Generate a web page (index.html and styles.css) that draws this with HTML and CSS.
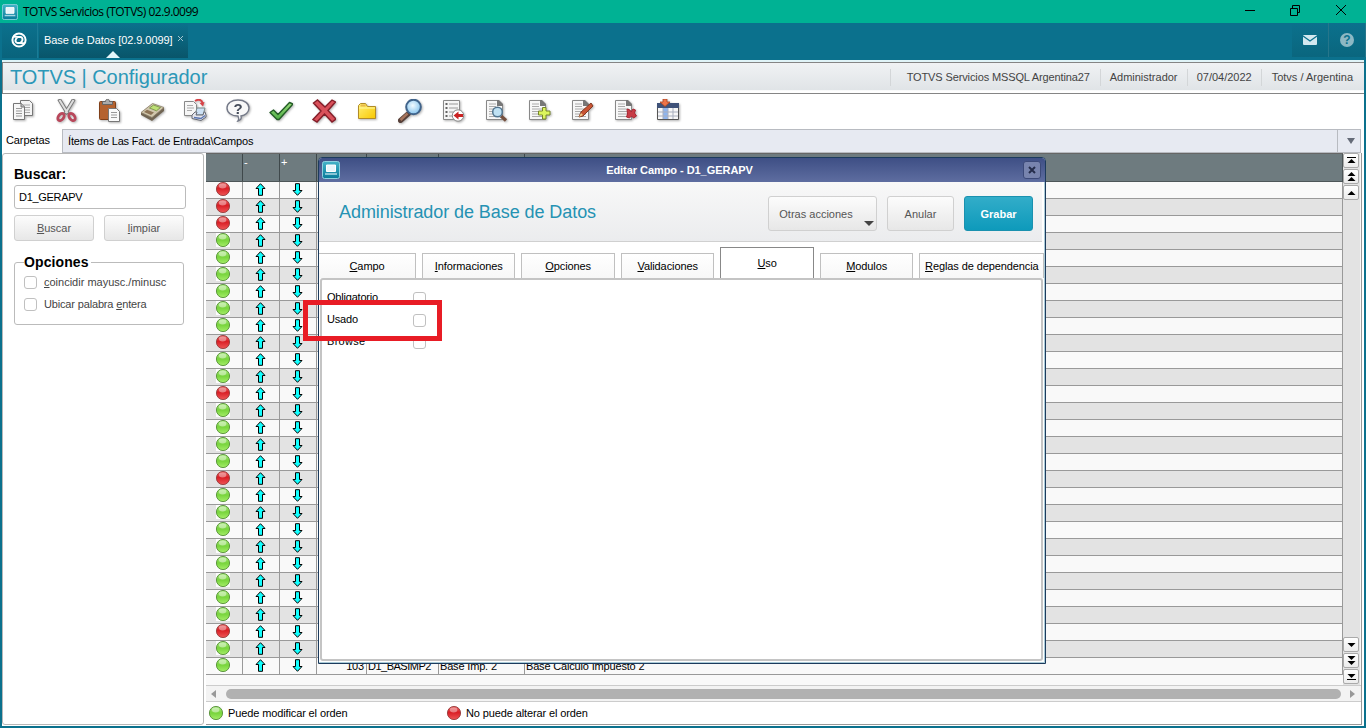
FILE: index.html
```html
<!DOCTYPE html>
<html lang="es">
<head>
  <meta charset="UTF-8">
  <meta name="viewport" content="width=device-width, initial-scale=1.0">
  <title>TOTVS Servicios (TOTVS) 02.9.0099</title>
  <link rel="stylesheet" href="styles.css">
</head>
<body>
  <!-- shared icons -->
  <svg class="defs" width="0" height="0">
    <defs>
      <linearGradient id="gTeal" x1="0" y1="0" x2="0" y2="1"><stop offset="0" stop-color="#45b3c8"/><stop offset="1" stop-color="#087b9a"/></linearGradient>
      <linearGradient id="gRed" x1="0" y1="0" x2="0" y2="1"><stop offset="0" stop-color="#e76464"/><stop offset=".45" stop-color="#d91e25"/><stop offset="1" stop-color="#ee5656"/></linearGradient>
      <linearGradient id="gGreen" x1="0" y1="0" x2="0" y2="1"><stop offset="0" stop-color="#a6e77d"/><stop offset=".5" stop-color="#78d43c"/><stop offset="1" stop-color="#a5ee69"/></linearGradient>
      <linearGradient id="gFolder" x1="0" y1="0" x2="1" y2="1"><stop offset="0" stop-color="#fff176"/><stop offset="1" stop-color="#f8c800"/></linearGradient>
      <linearGradient id="gCheck" x1="0" y1="0" x2="0" y2="1"><stop offset="0" stop-color="#9bdc7c"/><stop offset="1" stop-color="#4fae45"/></linearGradient>
      <radialGradient id="gLens" cx=".45" cy=".4" r=".6"><stop offset="0" stop-color="#f2fbff"/><stop offset="1" stop-color="#86c4ee"/></radialGradient>
      <symbol id="app" viewBox="0 0 18 18"><rect x=".5" y=".5" width="17" height="17" rx="2" fill="url(#gTeal)" stroke="#8dd1df"/><path d="M4.500 4h9v6.500h-9z" fill="#e8f5fa" stroke="#fff"/><path d="M3 13h12" stroke="#a5d5e2" stroke-width="1.600"/></symbol>
      <symbol id="red" viewBox="0 0 16 16"><circle cx="8" cy="8" r="6.600" fill="url(#gRed)" stroke="#963c3c" stroke-width=".9"/><ellipse cx="7.600" cy="5" rx="3.800" ry="2.400" fill="#fff" opacity=".4"/></symbol>
      <symbol id="green" viewBox="0 0 16 16"><rect x="1" y="1" width="14" height="14" fill="#fcfcfc"/><circle cx="8" cy="8" r="6.600" fill="url(#gGreen)" stroke="#558f37" stroke-width=".9"/><ellipse cx="7.600" cy="5" rx="3.800" ry="2.400" fill="#fff" opacity=".45"/></symbol>
      <symbol id="up" viewBox="0 0 11 13"><path d="M5.500 .7L10 5.500H7.500v6.800h-4V5.500H1z" fill="#1ff" stroke="#000"/></symbol>
      <symbol id="down" viewBox="0 0 11 13"><path d="M5.500 12.300L10 7.500H7.500V.7h-4v6.800H1z" fill="#1ff" stroke="#000"/></symbol>
      <symbol id="page" viewBox="0 0 24 24"><path d="M2.500 1.500h11.500l4.500 4.500v14.500h-16z" fill="#f7f7f7" stroke="#888"/><path d="M13 1h2l4 4v2h-6z" fill="#777"/><path d="M5 5h7M5 7.500h7M5 10h11M5 12.500h11M5 15h11M5 17.500h11" stroke="#aaa"/></symbol>
    </defs>
  </svg>

  <div class="titlebar">
    <svg class="app-icon" width="16" height="16"><use href="#app"/></svg>
    <span class="title-text">TOTVS Servicios (TOTVS) 02.9.0099</span>
    <svg class="win-controls" width="104" height="14" fill="none" stroke="#000"><path d="M0 7.500h10M45.500 5.500h7v7h-7zM47.500 5v-2.500h7v7h-2.500M91 2l10 10M101 2l-10 10"/></svg>
  </div>

  <div class="tabbar">
    <div class="home"><svg width="16" height="16" fill="none" stroke="#fff" stroke-width="2"><circle cx="8" cy="8" r="6.600"/><path d="M2 4.500L7 5h2.500c2 0 2.500 2.500 1.500 4L9.500 11M14 11.500L9 11H6.500c-2 0-2.500-2.500-1.500-4L6.500 5"/></svg></div>
    <div class="app-tab"><span>Base de Datos [02.9.0099]</span><svg width="7" height="7" stroke="#a4c6d0"><path d="M1 1l5 5M6 1L1 6"/></svg><i class="pointer"></i></div>
    <div class="tool"><svg width="14" height="10"><rect width="14" height="10" rx="1" fill="#d3e8ef"/><path d="M0 1l7 5 7-5" fill="none" stroke="#0b718d" stroke-width="1.300"/></svg></div>
    <div class="tool"><span class="help">?</span></div>
  </div>

  <div class="window">
    <div class="header">
      <h1>TOTVS | Configurador</h1>
      <span class="info i1">TOTVS Servicios MSSQL Argentina27</span>
      <span class="info i2">Administrador</span>
      <span class="info i3">07/04/2022</span>
      <span class="info i4">Totvs / Argentina</span>
    </div>

    <div class="toolbar">
      <!-- copiar -->
      <svg viewBox="0 0 24 24"><path d="M9.500 1.500h9l3 3v12h-12z" fill="#f4f4f4" stroke="#777"/><path d="M12 6h7M12 8.500h7M12 11h7M12 13.500h7" stroke="#aaa"/><path d="M2.500 4.500h8l3 3v13h-11z" fill="#f7f7f7" stroke="#777"/><path d="M10 4v4h4" fill="#bbb" stroke="#777"/><path d="M5 9.500h6M5 12h6M5 14.500h6M5 17h6" stroke="#999"/></svg>
      <!-- cortar -->
      <svg viewBox="0 0 24 24" fill="none"><path d="M5 0l9 15M20 0l-9 15" stroke="#777" stroke-width="3.800"/><path d="M5.500 1l8 13M19.500 1l-8 13" stroke="#dedede" stroke-width="2"/><ellipse cx="7" cy="18" rx="2.600" ry="4" transform="rotate(38 7 18)" stroke="#b9475b" stroke-width="2.800"/><ellipse cx="18" cy="18" rx="2.600" ry="4" transform="rotate(-38 18 18)" stroke="#b9475b" stroke-width="2.800"/></svg>
      <!-- pegar -->
      <svg viewBox="0 0 24 24"><rect x="2.500" y="2.500" width="16" height="18" rx="1" fill="#b4622f" stroke="#804019"/><path d="M5.500 5.500v-3h3c0-3 4-3 4 0h3v3z" fill="#aaa" stroke="#666"/><path d="M11.500 9.500h8l3 3v10h-11z" fill="#fafafa" stroke="#777"/><path d="M14 13.500h6M14 16h6M14 18.500h6" stroke="#999"/></svg>
      <!-- calculadora -->
      <svg viewBox="0 0 24 24"><path d="M1 14l11-9 12 4v3L12 22 1 16z" fill="#716553"/><path d="M1 13.500L12.500 4.500 24 8.500 12 18.500z" fill="#d0c6ac" stroke="#8b7f68" stroke-width=".8"/><path d="M9.500 9l4-3 7 2.500-4 3.300z" fill="#bedf76" stroke="#6d8c3d" stroke-width=".8"/><path d="M4 13l3-2.200 7 2.700-3 2.400z" fill="#8c7356"/></svg>
      <!-- imprimir -->
      <svg viewBox="0 0 24 24"><path d="M1.500 2.500h9l3 3v11h-12z" fill="#f6f6f6" stroke="#888"/><path d="M4 6.500h6M4 9h7M4 11.500h5" stroke="#aaa"/><path d="M12 2c4-2.500 7-1 7.500 2" fill="none" stroke="#d74347" stroke-width="2"/><path d="M16.500 4l5-1-1.500 4.500z" fill="#d74347"/><path d="M14 9h8l-2 7h-8z" fill="#cde1f5" stroke="#788"/><path d="M9 16l3-3h2l-1 3h7l1-3h1l1 3v2l-5 3.500-9-2z" fill="#e4e5ec" stroke="#666a75"/><path d="M11 18.500l7 1 4-3" fill="none" stroke="#5874b1" stroke-width="1.300"/></svg>
      <!-- ayuda -->
      <svg viewBox="0 0 24 24"><path d="M12 1c6.600 0 11 3.600 11 8s-4 7.500-8 8c1 3-1 4.500-3 5 1-1.500 1-3 0-5C5.500 17 1 13.500 1 9s4.400-8 11-8z" fill="#f8f8f8" stroke="#737887" stroke-width="1.400"/><text x="12" y="14.500" text-anchor="middle" class="qmark">?</text></svg>
      <!-- aceptar -->
      <svg viewBox="0 0 24 24"><path d="M1 13.500l3.500-2.500 4.500 4.500L20.500 3.500 24 5 10 20.500H8z" fill="url(#gCheck)" stroke="#235c26" stroke-width="1.400" stroke-linejoin="round"/></svg>
      <!-- cancelar -->
      <svg viewBox="0 0 24 24"><path d="M1.500 4l4-3L13 8l7-7 3.500 2L16 11.500l8 8.500-4 3-7.500-8L5 23l-4-2.500 8-8.500z" fill="#d9505a" stroke="#841d28" stroke-width="1.400"/></svg>
      <!-- carpeta -->
      <svg viewBox="0 0 24 24"><path d="M3.500 19.500V6.500l2-2h5l2 3h8v12z" fill="url(#gFolder)" stroke="#b18b27"/><path d="M5.500 6.500h5" stroke="#e7b84d" stroke-width="2"/><path d="M4 9h16" stroke="#fff8a1"/></svg>
      <!-- buscar -->
      <svg viewBox="0 0 24 24"><path d="M2.500 21.500l8-7" stroke="#574039" stroke-width="5" stroke-linecap="round"/><path d="M2.500 21l7-6.500" stroke="#a6745c" stroke-width="2.500"/><circle cx="15.500" cy="8" r="7.300" fill="url(#gLens)" stroke="#41648b" stroke-width="2"/></svg>
      <svg viewBox="0 0 24 24"><path d="M2.500 1.500h16v19h-16z" fill="#f5f5f5" stroke="#888"/><path d="M8 5h9M8 9h9M8 13h7M8 17h4" stroke="#999"/><path d="M4.500 5h2M4.500 9h2M4.500 13h2M4.500 17h2" stroke="#333" stroke-width="1.500"/><circle cx="17" cy="16.500" r="5.700" fill="#fff" stroke="#888"/><path d="M12.500 16.500l5-4v2.500H22v3h-4.500v2.500z" fill="#ca2222"/></svg>
      <svg viewBox="0 0 24 24"><use href="#page"/><path d="M17 17l5 4.500" stroke="#76513f" stroke-width="3.400"/><circle cx="13.500" cy="13" r="4.800" fill="#bfe1f3" stroke="#527590" stroke-width="1.500"/></svg>
      <svg viewBox="0 0 24 24"><use href="#page"/><path d="M15.500 8.500h3.500v3.500h4v4h-4v4h-3.500v-4h-4v-4h4z" fill="#dcf55d" stroke="#77862a"/></svg>
      <svg viewBox="0 0 24 24"><use href="#page"/><path d="M9 18l2-5 10-9 2 3-10 10z" fill="#c85434" stroke="#813923"/><path d="M9 18l2-4 2 2z" fill="#f1c783"/></svg>
      <svg viewBox="0 0 24 24"><use href="#page"/><path d="M14 10l3 1 1 2 2-3 2.500 1-1 3 2 3-3 2-2-2-2 2-3-1 1-3z" fill="#c73c46" stroke="#a92430"/></svg>
      <svg viewBox="0 0 24 24"><path d="M1.500 4.500h21v16h-21z" fill="#f7f7f7" stroke="#555"/><path d="M1 4h22v5H1z" fill="#3f5279"/><path d="M7 9h5v11H7z" fill="#8eb5ef"/><path d="M2 13h20M2 17h20M7 9v11M12 9v11M17 9v11" stroke="#a9afbe"/><path d="M7 0h4v3h3L9 7.500 4 3h3z" fill="#ee7448" stroke="#a84424" stroke-width=".8"/></svg>
    </div>

    <div class="path-row">
      <label>Carpetas</label>
      <div class="combo"><span>Ítems de Las Fact. de Entrada\Campos</span><div class="combo-arrow"><i class="tri-down"></i></div></div>
    </div>

    <div class="main">
      <div class="search-panel">
        <h2>Buscar:</h2>
        <div class="search-input">D1_GERAPV</div>
        <div class="search-buttons"><div class="btn"><u>B</u>uscar</div><div class="btn"><u>l</u>impiar</div></div>
        <div class="options">
          <h2>Opciones</h2>
          <div class="option"><i class="check"></i><span class="case"><u>c</u>oincidir mayusc./minusc</span></div>
          <div class="option"><i class="check"></i><span>Ubicar palabra <u>e</u>ntera</span></div>
        </div>
      </div>

      <div class="grid-panel">
        <div class="grid-area">
          <div class="grid">
            <div class="grid-row grid-head"><div></div><div>-</div><div>+</div><div></div><div></div><div></div><div></div></div>
            <div id="rows"></div>
          </div>
          <div class="vscroll">
            <div class="sbtn"><svg><path d="M3 3h9v1H3zM7.500 5l4 4h-8z"/></svg></div>
            <div class="sbtn"><svg><path d="M7.500 2l4 4h-8zM7.500 7l4 4h-8z"/></svg></div>
            <div class="sbtn"><svg><path d="M7.500 5l4 4h-8z"/></svg></div>
            <div class="track"></div>
            <div class="sbtn"><svg><path d="M3.500 5h8l-4 4z"/></svg></div>
            <div class="sbtn"><svg><path d="M3.500 2h8l-4 4zM3.500 7h8l-4 4z"/></svg></div>
            <div class="sbtn"><svg><path d="M3.500 4h8l-4 4zM3 9h9v1H3z"/></svg></div>
          </div>
        </div>
        <div class="hscroll"><i class="tri-left"></i><div class="thumb"></div><i class="tri-right"></i></div>
        <div class="legend">
          <div class="legend-item first"><svg width="16" height="16"><use href="#green"/></svg><span>Puede modificar el orden</span></div>
          <div class="legend-item"><svg width="16" height="16"><use href="#red"/></svg><span>No puede alterar el orden</span></div>
        </div>
      </div>
    </div>
  </div>

  <div class="dialog">
    <div class="dialog-title"><svg width="18" height="18"><use href="#app"/></svg><span>Editar Campo - D1_GERAPV</span><div class="close"><svg width="8" height="8" stroke="#252d4b" stroke-width="2"><path d="M1 1l6 6M7 1L1 7"/></svg></div></div>
    <div class="dialog-head">
      <h1>Administrador de Base de Datos</h1>
      <div class="btn other">Otras acciones<i></i></div>
      <div class="btn cancel">Anular</div>
      <div class="btn save">Grabar</div>
    </div>
    <div class="tabs">
      <div class="tab"><span><u>C</u>ampo</span></div>
      <div class="tab"><span><u>I</u>nformaciones</span></div>
      <div class="tab"><span><u>O</u>pciones</span></div>
      <div class="tab"><span><u>V</u>alidaciones</span></div>
      <div class="tab active"><span><u>U</u>so</span></div>
      <div class="tab"><span><u>M</u>odulos</span></div>
      <div class="tab last"><span><u>R</u>eglas de dependencia</span></div>
    </div>
    <div class="sheet">
      <div class="field"><label>Obligatorio</label><i class="check"></i></div>
      <div class="field"><label>Usado</label><i class="check"></i></div>
      <div class="field"><label class="wide">Browse</label><i class="check"></i></div>
    </div>
  </div>
  <div class="marker"></div>

  <script>
    // rows whose order can't be changed
    const locked = [0, 1, 2, 9, 12, 17, 26];
    const total = 29;
    const lastRow = ['103', 'D1_BASIMP2', 'Base Imp. 2', 'Base Calculo Impuesto 2'];
    let html = '';

    for (let i = 0; i < total; i++) {
      const ball = locked.includes(i) ? 'red' : 'green';
      const cells = i === total - 1 ? lastRow : ['', '', '', ''];
      html += `<div class="grid-row">
        <div><svg class="ball" width="16" height="16"><use href="#${ball}"/></svg></div>
        <div><svg class="arrow" width="11" height="13"><use href="#up"/></svg></div>
        <div><svg class="arrow" width="11" height="13"><use href="#down"/></svg></div>
        ${cells.map(c => `<div>${c ? `<span>${c}</span>` : ''}</div>`).join('')}
      </div>`;
    }
    document.getElementById('rows').innerHTML = html;
  </script>
</body>
</html>
```
FILE: styles.css
```css
* {
  box-sizing: border-box;
}
body {
  margin: 0;
  width: 1366px;
  height: 728px;
  overflow: hidden;
  background: #0b718d;
  font-family: "Liberation Sans", Arial, sans-serif;
  font-size: 11px;
  color: #000;
  position: relative;
}
h1, h2 {
  margin: 0;
  font-weight: normal;
}
svg {
  display: block;
  flex: none;
}
.defs {
  position: absolute;
}
span, label {
  white-space: nowrap;
}
u {
  text-underline-offset: 1px;
}

/* title bar */
.titlebar {
  height: 23px;
  background: #00b294;
  display: flex;
  align-items: center;
  padding: 0 17px 0 2px;
}
.title-text {
  font-family: "Open Sans", sans-serif;
  font-size: 12px;
  letter-spacing: -0.52px;
  margin-left: 5px;
}
.win-controls {
  margin-left: auto;
  margin-top: -3px;
}

.tabbar {
  height: 37px;
  display: flex;
  padding-left: 2px;
}
.home {
  width: 36px;
  height: 35px;
  padding: 9px 0 0 9px;
  background: linear-gradient(#0b718d, #09637c);
  border-right: 1px solid #1b7c96;
}
.app-tab {
  width: 149px;
  height: 35px;
  margin-left: 1px;
  margin-right: auto;
  padding: 0 0 1px 5px;
  display: flex;
  align-items: center;
  color: #fff;
  background: linear-gradient(#0b718d, #09556a);
  position: relative;
}
.app-tab span {
  width: 128px;
  letter-spacing: -0.07px;
}
.app-tab svg {
  margin-left: 5px;
  margin-top: -3px;
}
.pointer {
  position: absolute;
  left: 67px;
  bottom: 0;
  border: 7px solid transparent;
  border-top: 0;
  border-bottom-color: #e6f6fa;
}
.tool {
  width: 37px;
  height: 34px;
  display: flex;
  align-items: center;
  justify-content: center;
  background: linear-gradient(#0b718d, #0a667e);
  border-right: 1px solid #26768b;
}
.help {
  width: 14px;
  height: 14px;
  border-radius: 50%;
  background: #8db8c4;
  color: #0b718d;
  font-weight: bold;
  font-size: 12px;
  line-height: 14px;
  text-align: center;
}

.window {
  margin: 0 2px;
  height: 666px;
  background: #fff;
  border-top: 2px solid #e0f4f8;
  display: flex;
  flex-direction: column;
}
.header {
  height: 32px;
  flex: none;
  border: 1px solid #858585;
  border-right: 0;
  background: linear-gradient(#f0f2f4, #e0e4e7 90%, #fff 92%);
  display: flex;
  align-items: center;
  padding: 0 11px 2px 0;
}
.header h1 {
  font-size: 20px;
  color: #2c98b8;
  margin: 0 auto 0 7px;
  letter-spacing: -0.05px;
}
.info {
  color: #444;
  border-left: 1px solid #d3d6d8;
  line-height: 17px;
}
.i1 { width: 210px; padding-left: 16px; letter-spacing: -0.12px; }
.i2 { width: 87px; padding-left: 9px; }
.i3 { width: 74px; padding-left: 9px; }
.i4 { padding-left: 10px; }

.toolbar {
  height: 35px;
  flex: none;
  display: flex;
  align-items: center;
  gap: 19px;
  padding: 0 0 1px 9px;
}
.toolbar svg {
  width: 24px;
  height: 24px;
  filter: drop-shadow(1px 1px 1px rgba(0, 0, 0, 0.3));
}
.qmark {
  font: bold 15px "Liberation Sans", sans-serif;
  fill: #444b59;
}

.path-row {
  height: 24px;
  flex: none;
  display: flex;
}
.path-row label {
  width: 60px;
  padding-left: 4px;
  line-height: 23px;
  letter-spacing: -0.1px;
}
.combo {
  width: 1299px;
  border: 1px solid #b8bbc1;
  background: #e7eaf2;
  display: flex;
  justify-content: space-between;
  line-height: 22px;
  padding-left: 5px;
  letter-spacing: -0.17px;
}
.combo-arrow {
  width: 23px;
  border-left: 1px solid #b8bbc1;
  display: flex;
  align-items: center;
  justify-content: center;
}
.tri-down {
  margin-left: 4px;
  border: 4px solid transparent;
  border-top: 6px solid #656b78;
  border-bottom: 0;
}

.main {
  display: flex;
  height: 572px;
  gap: 2px;
}
.search-panel {
  width: 202px;
  border: 1px solid #b8b8b8;
  border-radius: 3px;
  padding: 12px 0 0 11px;
}
.search-panel h2 {
  font-weight: bold;
  font-size: 14px;
  line-height: 16px;
  white-space: nowrap;
}
.search-input {
  width: 172px;
  height: 24px;
  margin-top: 3px;
  border: 1px solid #bbb;
  border-radius: 3px;
  padding-left: 4px;
  line-height: 23px;
  letter-spacing: -0.3px;
}
.search-buttons {
  display: flex;
  gap: 10px;
  margin-top: 6px;
}
.btn {
  width: 80px;
  height: 26px;
  line-height: 25px;
  text-align: center;
  border: 1px solid #d0d0d0;
  border-radius: 3px;
  background: linear-gradient(#fcfcfc, #e7e7e7);
  color: #555;
}
.options {
  width: 170px;
  height: 63px;
  margin-top: 21px;
  border: 1px solid #bbb;
  border-radius: 3px;
  padding-left: 9px;
}
.options h2 {
  width: 67px;
  margin-top: -9px;
  margin-bottom: 1px;
  background: #fff;
  letter-spacing: 0.1px;
}
.option {
  display: flex;
  align-items: center;
  height: 22px;
  color: #444;
}
.check {
  width: 13px;
  height: 13px;
  flex: none;
  border: 1px solid #c0c0c0;
  border-radius: 3px;
  background: #fff;
}
.option span {
  margin-left: 7px;
  letter-spacing: -0.16px;
}
.option .case {
  letter-spacing: 0;
}

/* grid */
.grid-panel {
  width: 1156px;
  border-right: 1px solid #999;
  border-bottom: 1px solid #999;
}
.grid-area {
  height: 532px;
  display: flex;
  background: #f9f9f9;
}
.grid {
  width: 1137px;
  border-top: 1px solid #666;
}
.grid-row {
  display: grid;
  grid-template-columns: 37px 37px 37px 50px 72px 86px 1fr;
  height: 17px;
  background: #f9f9f9;
  border-bottom: 1px solid #999;
  border-right: 1px solid #999;
  letter-spacing: -0.17px;
}
.grid-row:nth-child(even) {
  background: #e3e3e3;
}
.grid-row > div {
  border-right: 1px solid #999;
  padding-left: 1px;
  line-height: 17px;
}
.grid-row > div:last-child {
  border-right: 0;
}
.grid-row > div:nth-child(4) {
  text-align: right;
  padding-right: 2px;
}
.grid-row > div:nth-child(5) {
  letter-spacing: -0.5px;
}
.grid-head {
  height: 28px;
  background: #6e7b7f;
  border-color: #4d5658;
  color: #fff;
}
.grid-head > div {
  border-color: #3f484b;
}
.ball {
  margin: -1px 0 0 8px;
}
.arrow {
  margin: 1px 0 0 11px;
}
.vscroll {
  width: 17px;
  background: #e3e3e3;
  display: flex;
  flex-direction: column;
}
.sbtn {
  width: 16px;
  height: 15px;
  margin-bottom: 1px;
  border: 1px solid #aaa;
  border-radius: 2px;
  background: linear-gradient(#fff, #ececec);
}
.sbtn svg {
  width: 14px;
  height: 13px;
}
.track {
  flex: 1;
}
.hscroll {
  height: 17px;
  border-top: 1px solid #ccc;
  border-bottom: 1px solid #ccc;
  background: #f3f3f3;
  display: flex;
  align-items: center;
  padding: 0 6px 0 5px;
}
.thumb {
  flex: 1;
  height: 10px;
  margin: 0 9px 0 10px;
  border-radius: 5px;
  background: #b1b1b1;
}
.tri-left, .tri-right {
  border: 4px solid transparent;
}
.tri-left {
  border-right: 5px solid #999;
  border-left: 0;
}
.tri-right {
  border-left: 5px solid #999;
  border-right: 0;
}
.legend {
  height: 22px;
  display: flex;
  align-items: center;
  padding-left: 2px;
}
.legend-item {
  display: flex;
  align-items: center;
}
.legend-item.first {
  width: 238px;
}
.legend-item span {
  margin-left: 4px;
  letter-spacing: -0.12px;
}

/* dialog over the grid */
.dialog {
  position: absolute;
  left: 318px;
  top: 157px;
  width: 728px;
  height: 507px;
  background: #fff;
  border: 1px solid #1c3b5d;
  border-radius: 4px 4px 0 0;
  box-shadow: inset -1px -1px #aacbd8;
}
.dialog-title {
  height: 24px;
  display: flex;
  align-items: center;
  justify-content: space-between;
  padding: 0 4px 0 3px;
  background: linear-gradient(#3e4f85, #5e6da0);
  border-radius: 3px 3px 0 0;
  color: #fff;
  font-weight: bold;
}
.dialog-title span {
  letter-spacing: -0.05px;
  margin-right: 4px;
}
.close {
  width: 18px;
  height: 18px;
  border: 1px solid #3c4a79;
  border-radius: 3px;
  background: #7884ae;
  display: flex;
  align-items: center;
  justify-content: center;
}
.dialog-head {
  height: 60px;
  margin-right: 3px;
  display: flex;
  align-items: center;
  padding: 0 9px 0 20px;
  background: linear-gradient(#f8f8f8, #ebecee);
  border-bottom: 1px solid #d0d0d0;
}
.dialog-head h1 {
  font-size: 18px;
  letter-spacing: -0.07px;
  color: #2592b3;
  margin: 2px auto 0 0;
}
.dialog-head .btn {
  height: 35px;
  line-height: 35px;
  margin-top: 3px;
}
.dialog-head .other {
  width: 109px;
  padding-right: 13px;
  position: relative;
}
.other i {
  position: absolute;
  right: 2px;
  bottom: 4px;
  border: 5px solid transparent;
  border-top-color: #444;
  border-bottom: 0;
}
.dialog-head .cancel {
  width: 67px;
  margin-left: 10px;
}
.dialog-head .save {
  width: 69px;
  margin-left: 10px;
  color: #fff;
  font-weight: bold;
  border-color: #1a91af;
  background: linear-gradient(#32adc9, #0e9abb);
}
.tabs {
  height: 36px;
  display: flex;
  align-items: flex-end;
  gap: 5.9px;
}
.tab {
  width: 93.6px;
  height: 25px;
  border: 1px solid #c0c0c0;
  border-bottom: 0;
  background: linear-gradient(#fff, #f7f7f7);
  line-height: 25px;
  text-align: center;
  letter-spacing: -0.1px;
}
.tab:first-child {
  width: 97px;
  border-left: 0;
}
.tab.active {
  height: 31px;
  line-height: 31px;
  border-color: #888;
  background: #fff;
}
.tab.last {
  width: 125px;
}
.sheet {
  height: 383px;
  margin: 0 2px 0 1px;
  border: 2px solid #c4c4c4;
  border-radius: 3px;
  padding: 7px 0 0 5px;
}
.field {
  height: 22px;
  display: flex;
  align-items: center;
}
.field label {
  width: 86px;
  margin-top: -2px;
  letter-spacing: -0.2px;
}
.field .wide {
  letter-spacing: 0.3px;
}

.marker {
  position: absolute;
  left: 303px;
  top: 300px;
  width: 139px;
  height: 41px;
  border: 5px solid #e81c25;
}
```
